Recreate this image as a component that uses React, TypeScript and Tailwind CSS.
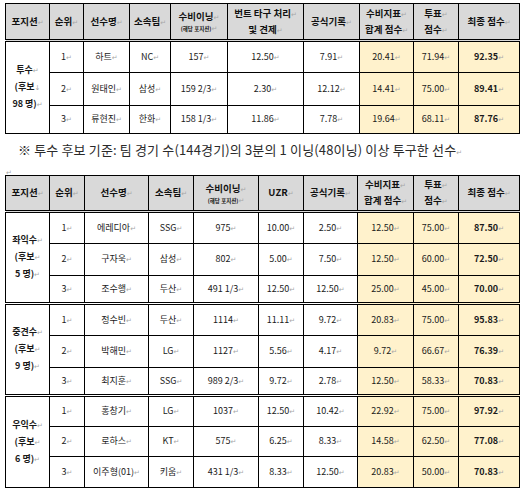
const Mark = ({ down }: { down?: boolean }) => (
  <span className="font-['DejaVu_Sans',sans-serif] text-[7px] font-normal text-[#a8a8a8]">
    {down ? "↓" : "↵"}
  </span>
);

const T = ({ children, down }: { children: React.ReactNode; down?: boolean }) => (
  <span className="whitespace-nowrap">
    {children}
    <Mark down={down} />
  </span>
);

type Row = [string, string, string, string, string, string, string, string, string];

const topRows: Row[] = [
  ["1", "하트", "NC", "157", "12.50", "7.91", "20.41", "71.94", "92.35"],
  ["2", "원태인", "삼성", "159 2/3", "2.30", "12.12", "14.41", "75.00", "89.41"],
  ["3", "류현진", "한화", "158 1/3", "11.86", "7.78", "19.64", "68.11", "87.76"],
];

const groups: { pos: string; cnt: string; h: string[]; rows: Row[] }[] = [
  {
    pos: "좌익수",
    cnt: "5 명)",
    h: ["h-[32px]", "h-[32px]", "h-[28px]"],
    rows: [
      ["1", "에레디아", "SSG", "975", "10.00", "2.50", "12.50", "75.00", "87.50"],
      ["2", "구자욱", "삼성", "802", "5.00", "7.50", "12.50", "60.00", "72.50"],
      ["3", "조수행", "두산", "491 1/3", "12.50", "12.50", "25.00", "45.00", "70.00"],
    ],
  },
  {
    pos: "중견수",
    cnt: "9 명)",
    h: ["h-[32px]", "h-[32px]", "h-[28px]"],
    rows: [
      ["1", "정수빈", "두산", "1114", "11.11", "9.72", "20.83", "75.00", "95.83"],
      ["2", "박해민", "LG", "1127", "5.56", "4.17", "9.72", "66.67", "76.39"],
      ["3", "최지훈", "SSG", "989 2/3", "9.72", "2.78", "12.50", "58.33", "70.83"],
    ],
  },
  {
    pos: "우익수",
    cnt: "6 명)",
    h: ["h-[31px]", "h-[30px]", "h-[31px]"],
    rows: [
      ["1", "홍창기", "LG", "1037", "12.50", "10.42", "22.92", "75.00", "97.92"],
      ["2", "로하스", "KT", "575", "6.25", "8.33", "14.58", "62.50", "77.08"],
      ["3", "이주형(01)", "키움", "431 1/3", "8.33", "12.50", "20.83", "50.00", "70.83"],
    ],
  },
];

const th = "border border-black bg-[#d9d9d9] p-0 text-center align-middle font-bold text-[9.5px] leading-[14px] text-[#111] border-b-[3px] border-double";
const td = "border border-black p-0 text-center align-middle text-[9px] leading-[12px] text-[#1a1a1a]";
const yellow = "bg-[#fff2cc]";

const Inning = () => (
  <th className={th}>
    <div className="flex flex-col items-center leading-[14px]">
      <T>수비이닝</T>
      <span className="text-[5.5px] leading-[9px]">
        <T>(해당 포지션)</T>
      </span>
    </div>
  </th>
);

const TwoLine = ({ a, b }: { a: string; b: string }) => (
  <th className={th}>
    <div className="flex flex-col items-center">
      <T>{a}</T>
      <T>{b}</T>
    </div>
  </th>
);

const DataCells = ({ r, sep }: { r: Row; sep?: boolean }) => {
  const s = sep ? " border-b-[3px] border-double" : "";
  return (
    <>
      {r.map((v, i) => (
        <td key={i} className={`${td}${s} ${i >= 6 ? yellow : ""} ${i === 8 ? "font-bold" : ""}`}>
          <T>{v}</T>
        </td>
      ))}
    </>
  );
};

const PosCell = ({ pos, cnt, down, sep }: { pos: string; cnt: string; down?: boolean; sep?: boolean }) => (
  <td rowSpan={3} className={`${td} text-[9.5px]${sep ? " border-b-[3px] border-double" : ""}`}>
    <div className="flex flex-col items-center font-bold leading-[15px]">
      <T>{pos}</T>
      <T down={down}>(후보</T>
      <T>{cnt}</T>
    </div>
  </td>
);

export default function App() {
  return (
    <div className="w-[520px] h-[494px] overflow-hidden bg-white font-['Noto_Sans_CJK_KR',sans-serif] pl-[5px] pt-[3px]">
      <table className="table-fixed border-collapse w-[514px]">
        <colgroup>
          {[44, 34, 46, 41, 57, 76, 56, 54, 45, 61].map((w, i) => (
            <col key={i} style={{ width: w }} />
          ))}
        </colgroup>
        <thead>
          <tr className="h-[37px]">
            <th className={th}><T>포지션</T></th>
            <th className={th}><T>순위</T></th>
            <th className={th}><T>선수명</T></th>
            <th className={th}><T>소속팀</T></th>
            <Inning />
            <TwoLine a="번트 타구 처리" b="및 견제" />
            <th className={th}><T>공식기록</T></th>
            <TwoLine a="수비지표" b="합계 점수" />
            <TwoLine a="투표" b="점수" />
            <th className={th}><T>최종 점수</T></th>
          </tr>
        </thead>
        <tbody>
          {topRows.map((r, i) => (
            <tr key={i} className={["h-[32px]", "h-[33px]", "h-[28px]"][i]}>
              {i === 0 && <PosCell pos="투수" cnt="98 명)" down />}
              <DataCells r={r} />
            </tr>
          ))}
        </tbody>
      </table>

      <p className="pl-[13px] pt-[7px] text-[13px] leading-[18px] text-[#2a2a2a] tracking-[0.15px] whitespace-nowrap">
        ※ 투수 후보 기준: 팀 경기 수(144경기)의 3분의 1 이닝(48이닝) 이상 투구한 선수
        <Mark />
      </p>
      <div className="pl-[1px] h-[13px] leading-[12px]">
        <Mark />
      </div>

      <table className="table-fixed border-collapse w-[514px]">
        <colgroup>
          {[44, 35, 64, 45, 65, 45, 54, 56, 45, 61].map((w, i) => (
            <col key={i} style={{ width: w }} />
          ))}
        </colgroup>
        <thead>
          <tr className="h-[36px]">
            <th className={th}><T>포지션</T></th>
            <th className={th}><T>순위</T></th>
            <th className={th}><T>선수명</T></th>
            <th className={th}><T>소속팀</T></th>
            <Inning />
            <th className={th}><T>UZR</T></th>
            <th className={th}><T>공식기록</T></th>
            <TwoLine a="수비지표" b="합계 점수" />
            <TwoLine a="투표" b="점수" />
            <th className={th}><T>최종 점수</T></th>
          </tr>
        </thead>
        <tbody>
          {groups.map((g, gi) =>
            g.rows.map((r, i) => (
              <tr key={`${gi}-${i}`} className={g.h[i]}>
                {i === 0 && <PosCell pos={g.pos} cnt={g.cnt} sep={gi < 2} />}
                <DataCells r={r} sep={i === 2 && gi < 2} />
              </tr>
            ))
          )}
        </tbody>
      </table>
    </div>
  );
}
